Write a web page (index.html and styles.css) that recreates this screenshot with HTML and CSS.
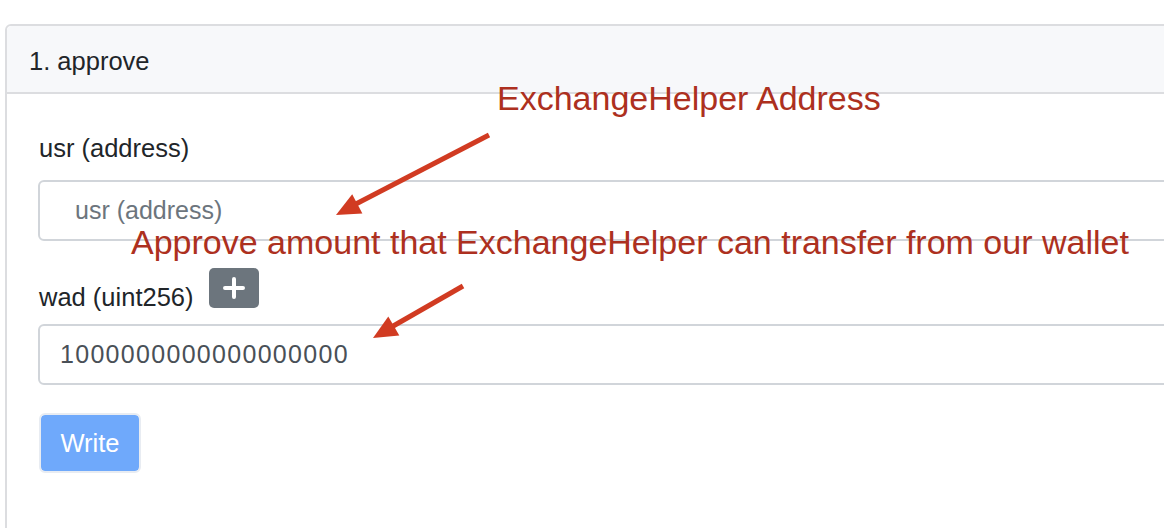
FILE: index.html
```html
<!DOCTYPE html>
<html>
<head>
<meta charset="utf-8">
<link rel="stylesheet" href="styles.css">
</head>
<body>
<div class="page">
  <div class="card">
    <div class="card-header">1. approve</div>
    <div class="card-body">
      <div class="group">
        <label class="label">usr (address)</label>
        <div class="input placeholder">usr (address)</div>
      </div>
      <div class="group">
        <div class="label-row">
          <label class="label">wad (uint256)</label>
          <span class="btn-plus"><svg width="22" height="22" viewBox="0 0 22 22"><path d="M11 2v18M2 11h18" stroke="#fff" stroke-width="4" stroke-linecap="round"/></svg></span>
        </div>
        <div class="input value">1000000000000000000</div>
      </div>
      <button class="btn-write">Write</button>
    </div>
  </div>
  <div class="note note-1">ExchangeHelper Address</div>
  <div class="note note-2">Approve amount that ExchangeHelper can transfer from our wallet</div>
  <svg class="arrows" width="1164" height="528" viewBox="0 0 1164 528">
    <line x1="489" y1="135" x2="352" y2="206" stroke="#d13b22" stroke-width="5"/>
    <polygon points="336,215 352.2,194.2 362.4,213.6" fill="#d13b22"/>
    <line x1="463" y1="286" x2="388" y2="329" stroke="#d13b22" stroke-width="5"/>
    <polygon points="373,338 388.3,316.5 399.3,335.5" fill="#d13b22"/>
  </svg>
</div>
</body>
</html>
```

FILE: styles.css
```css
html, body {
  margin: 0;
  padding: 0;
  background: #fff;
  overflow: hidden;
}
body {
  font-family: "Liberation Sans", Arial, Helvetica, sans-serif;
  color: #212529;
}
.page {
  position: relative;
  width: 1164px;
  height: 528px;
  overflow: hidden;
}
.card {
  margin: 24px -40px 0 5px;
  border: 2px solid #dcdde0;
  border-radius: 6px;
  height: 560px;
  box-sizing: border-box;
}
.card-header {
  background: #f7f8fa;
  border-bottom: 2px solid #dcdde0;
  border-radius: 5px 5px 0 0;
  height: 68px;
  box-sizing: border-box;
  padding: 0 0 0 22px;
  font-size: 25.5px;
  line-height: 70px;
  color: #212529;
}
.card-body {
  padding: 36px 0 0 31px;
}
.group {
  display: flex;
  flex-direction: column;
}
.label {
  font-size: 25.5px;
  line-height: 36px;
  height: 36px;
  padding-left: 1px;
  margin-bottom: 14px;
  color: #212529;
}
.input {
  height: 61px;
  box-sizing: border-box;
  border: 2px solid #d1d5da;
  border-radius: 6px;
  font-size: 25px;
  line-height: 57px;
  background: #fff;
}
.placeholder {
  color: #6c757d;
  padding-left: 35px;
}
.value {
  color: #495057;
  padding-left: 20px;
  letter-spacing: 1.3px;
}
.group + .group {
  margin-top: 27px;
}
.label-row {
  display: flex;
  align-items: flex-end;
  height: 47px;
  margin-bottom: 9px;
}
.label-row .label {
  margin-bottom: 0;
}
.btn-plus {
  display: flex;
  align-items: center;
  justify-content: center;
  width: 50px;
  height: 40px;
  margin: 0 0 7px 15px;
  background: #6c757d;
  border-radius: 5px;
}
.btn-write {
  display: block;
  margin-top: 28px;
  margin-left: 1px;
  width: 102px;
  height: 60px;
  box-sizing: border-box;
  border: 2px solid #e8ecf2;
  border-radius: 6px;
  background: #6fa9fb;
  background-clip: padding-box;
  color: #fff;
  font-family: "Liberation Sans", Arial, sans-serif;
  font-size: 25.5px;
  padding: 0;
}
.note {
  position: absolute;
  font-size: 34px;
  line-height: 34px;
  color: #ad3020;
  white-space: nowrap;
}
.note-1 {
  left: 497px;
  top: 81px;
}
.note-2 {
  left: 131px;
  top: 225px;
}
.arrows {
  position: absolute;
  left: 0;
  top: 0;
}
```
